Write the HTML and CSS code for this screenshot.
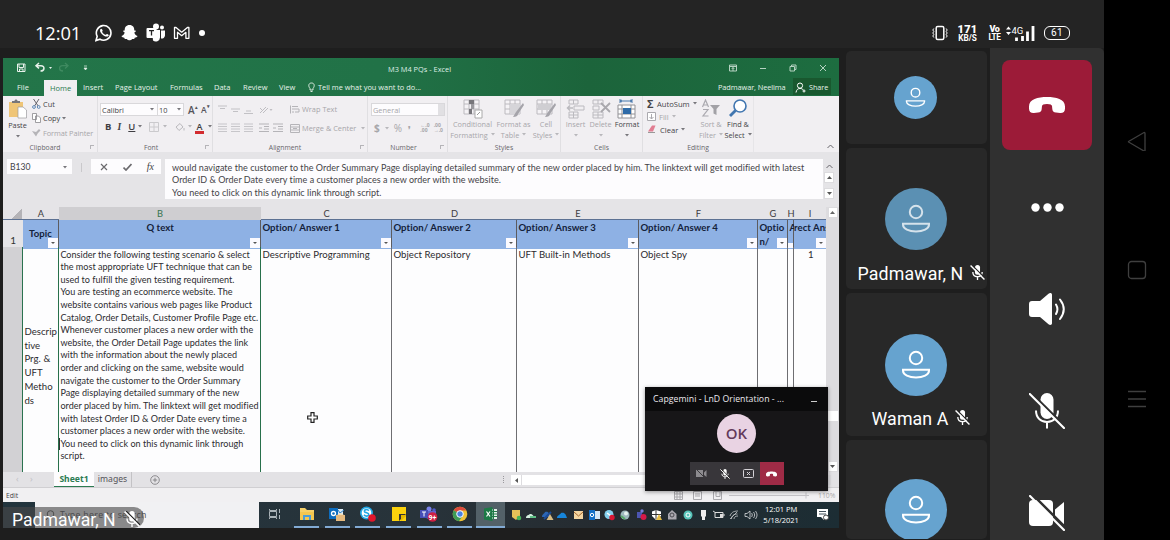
FILE: index.html
```html
<!DOCTYPE html>
<html lang="en">
<head>
<meta charset="utf-8">
<title>Meeting</title>
<link rel="stylesheet" href="styles.css">
</head>
<body>
<svg class="defs" width="0" height="0">
  <symbol id="person" viewBox="0 0 62 62"><circle cx="31" cy="24" r="6.2"/><path d="M18 35.8h26v1c0 4-6 6.600-13 6.600s-13-2.600-13-6.600z"/></symbol>
  <symbol id="micoff" viewBox="0 0 36 36"><rect x="11.500" y="0" width="13" height="26" rx="6.500" fill="currentColor"/><path d="M7 17.500c0 7 4.500 11.500 11 11.500s11-4.500 11-11.500M18 29v6.500" fill="none" stroke="currentColor" stroke-width="2"/><path class="cut" d="M2.500 .2L36 33.500" /><path d="M.8 1L35 35" stroke="currentColor" stroke-width="2.100" stroke-linecap="round"/></symbol>
  <symbol id="micsmall" viewBox="0 0 16 16"><rect x="5.300" y="0" width="5.400" height="10.500" rx="2.700" fill="currentColor"/><path d="M3 7.500c0 3.300 2 5 5 5s5-1.700 5-5M8 12.500V16" fill="none" stroke="currentColor" stroke-width="1.400"/><path class="scut" d="M2 0L16 14"/><path d="M.6.600L15.400 15.400" stroke="currentColor" stroke-width="1.500"/></symbol>
  <symbol id="phone" viewBox="0 0 36 18"><path d="M18 1C9 1 0 3 0 10.500v2C0 16 2 17.200 5 17l4-.5c2.500-.3 3.500-1 3.700-3.500l.3-3c.2-1.300 1.500-2 5-2s4.800.7 5 2l.3 3c.2 2.500 1.200 3.200 3.700 3.500l4 .5c3 .2 5-1 5-4.500v-2C36 3 27 1 18 1z" fill="currentColor"/></symbol>
  <symbol id="lines" viewBox="0 0 9 9"><path d="M0 1h9M0 3.500h9M0 6h9M0 8.500h9" stroke="#c2c1c5" stroke-width=".9"/></symbol>
  <symbol id="down" viewBox="0 0 4 3"><path d="M0 0h4L2 2.600z" fill="currentColor"/></symbol>
  <symbol id="table" viewBox="0 0 20 20"><path d="M1 1h15v14H1zM1 5h15M1 10h15M6 1v14M11 1v14" fill="#f5f3f6" stroke="#bcbabf"/></symbol>
</svg>
<div class="screen">
<div class="phone">
  <header class="status">
    <span class="clock">12:01</span>
    <svg class="notif" width="112" height="20" viewBox="0 0 112 20">
      <path d="M1 17.500l1.200-4.200A7.300 7.300 0 1 1 5 16.200z" fill="none" stroke="#fff" stroke-width="1.600"/>
      <path d="M5.300 6.200c1-1 1.700-.6 2.300 1 .3.800-.8 1.300-.3 2 .8 1.300 1.600 2 2.900 2.600.8.400 1.200-1.300 2-.8 1.500.8 2 1.200 1.200 2-2.500 2.500-9.900-3.300-8.100-6.800z" fill="#fff"/>
      <path d="M34.500 2c3.300 0 4.900 2.300 4.800 5.500l1.300-.1.200 1-1.500 1c.5 2 1.500 3 3.200 3.600-.2 1.400-1.700 1.500-2.800 1.800l-.5 1.200-2-.1c-1 1-1.800 1.300-2.700 1.300s-1.700-.3-2.700-1.300l-2 .1-.5-1.200c-1.100-.3-2.600-.4-2.800-1.800 1.700-.6 2.700-1.600 3.200-3.600l-1.500-1 .2-1 1.300.1C29.600 4.300 31.200 2 34.500 2z" fill="#fff"/>
      <circle cx="61" cy="3.500" r="3" fill="#fff"/><circle cx="67" cy="4.500" r="2" fill="#fff"/><path d="M57 7h8v7.500a4.200 4.200 0 0 1-7 3zM66 7.500h4v5a3.300 3.300 0 0 1-4 3z" fill="#fff"/><rect x="51.500" y="5" width="10" height="10" rx="1" fill="#fff"/><path d="M54 7.600h5M56.500 7.600v5" stroke="#242424" stroke-width="1.300"/>
      <path d="M79.500 15.300V4.500h1.500l5.700 4.700 5.700-4.700h1.500v10.800h-3V9.300l-4.200 3.400-4.200-3.400v6z" fill="none" stroke="#fff" stroke-width="1.300" stroke-linejoin="round"/>
      <circle cx="107" cy="10" r="3" fill="#fff"/>
    </svg>
    <span class="spacer"></span>
    <svg class="vib" width="16" height="16" viewBox="0 0 16 16"><rect x="4.200" y="1.500" width="7.600" height="13" rx="1.500" fill="none" stroke="#fff" stroke-width="1.500"/><path d="M1.800 3.500l-1 1.500 1 1.500-1 1.500 1 1.500-1 1.500 1 1.500M14.200 3.500l1 1.500-1 1.500 1 1.500-1 1.500 1 1.500-1 1.500" fill="none" stroke="#fff"/></svg>
    <span class="speed"><b>171</b><i>KB/S</i></span>
    <span class="volte"><b>Vo</b><i>LTE</i></span>
    <svg width="29" height="18" viewBox="0 0 29 18" class="signal"><path d="M0 5.500L2.500 2.500 5 5.500zM0 8l2.500 3L5 8z" fill="#fff"/><path d="M10.500 13.500V17M16.500 12V17M21.500 7.500V17M27 2V17" stroke="#fff" stroke-width="2.800"/><text x="5.500" y="9.500" class="g4">4G</text></svg>
    <span class="battery">61</span>
  </header>
  <main class="call">
    <section class="share">
      <div class="excel">
        <div class="titlebar">
          <svg width="80" height="14" viewBox="0 0 80 14" fill="none" stroke="#e7f1ea"><path d="M1.500 3h7.500v7.500H1.500zM3 3v3.500h4.500V3M3.500 10.500V8h3.500v2.500" /><path d="M23 2l-3 2.700 3 2.700M20.500 4.700H25c4 0 4 5.300-.5 5.300" stroke-width="1.500"/><path d="M33 6h3l-1.500 2z" fill="#e7f1ea" stroke="none"/><path d="M49 2l3 2.700L49 7.400M51 4.700h-4.500c-4 0-4 5.300.5 5.300" stroke="#3f8a60" stroke-width="1.300"/><path d="M68 5h3M68 7h3l-1.500 2z" fill="#e7f1ea" stroke-width=".7"/></svg>
          <span class="doc">M3 M4 PQs - Excel</span>
          <svg width="104" height="12" viewBox="0 0 104 12" fill="none" stroke="#b5d2c1"><path d="M1.500 3h7v6h-7zM1.500 4.500h7M5 9V5.500M3.700 7L5 5.500 6.300 7"/><path d="M32 6.500h6M62 4.500h4.500V9H62zM63.500 4.500V3H68v4.500h-1.500M92 3l6 6M98 3l-6 6"/></svg>
        </div>
        <nav class="tabs">
          <span class="t-file">File</span><span class="t-home">Home</span><span class="t-ins">Insert</span><span class="t-pl">Page Layout</span><span class="t-fo">Formulas</span><span class="t-da">Data</span><span class="t-re">Review</span><span class="t-vi">View</span>
          <span class="tell"><svg width="7" height="10" viewBox="0 0 7 10" fill="none" stroke="#dcebe1"><path d="M2 6.500C0 4 .5 1 3.500 1S7 4 5 6.500V8H2zM2.500 9.500h2"/></svg>Tell me what you want to do...</span>
          <span class="user">Padmawar, Neelima</span>
          <span class="sharebtn"><svg width="11" height="11" viewBox="0 0 11 11" fill="none" stroke="#fff"><circle cx="5" cy="3.600" r="2.600"/><path d="M1 10.500C1.500 7.500 3 6.500 5 6.500s2.500.6 3.300 1.500M9 7.500v3M7.500 9h3"/></svg>Share</span>
        </nav>
        <div class="ribbon">
          <div class="group clip">
            <div class="g-body">
              <div class="big paste"><svg width="19" height="20" viewBox="0 0 19 20"><path d="M1 3h14v15H1z" fill="#efc577"/><path d="M4 4V2h2.500c0-2 3-2 3 0H12v2z" fill="#77767a"/><path d="M10 8h5l3.500 3v8H10z" fill="#fff" stroke="#9c9b9f" stroke-width=".7"/></svg><span>Paste</span><svg class="ar" width="4" height="3"><use href="#down"/></svg></div>
              <div class="stack cs">
                <span><svg width="9" height="10" viewBox="0 0 9 10" fill="none" stroke="#66656b"><path d="M1.500 0l4.700 7M7 0L2.500 7"/><circle cx="2" cy="8" r="1.400" stroke="#5e89b7"/><circle cx="6.700" cy="8" r="1.400" stroke="#5e89b7"/></svg>Cut</span>
                <span><svg width="9" height="10" viewBox="0 0 9 10" fill="#fff" stroke="#88878c" stroke-width=".8"><path d="M.5.5h4v6h-4zM3.500 3h3L8.500 5v4.500h-5z"/></svg>Copy <svg class="ar" width="4" height="3"><use href="#down"/></svg></span>
                <span class="dim"><svg width="9" height="8" viewBox="0 0 9 8"><path d="M0 2l4 1 3-3 1.500 1.500L6 4 4 7.500z" fill="#b5b4b8"/></svg>Format Painter</span>
              </div>
            </div>
            <div class="g-label corn"><span>Clipboard</span></div>
          </div>
          <div class="group font">
            <div class="g-body col">
              <div class="row r1"><span class="combo c1">Calibri<svg class="ar" width="4" height="3"><use href="#down"/></svg></span><span class="combo c2">10<svg class="ar" width="4" height="3"><use href="#down"/></svg></span><span class="ga">A<sup>▴</sup></span><span class="gs">A<sup>▾</sup></span></div>
              <div class="row r2"><b>B</b><em>I</em><u>U</u><svg class="ar" width="4" height="3"><use href="#down"/></svg>
                <svg width="10" height="10" viewBox="0 0 10 10" fill="none" stroke="#cbcacd"><path d="M.5.5h9v9h-9zM5 .5v9M.5 5h9"/></svg><svg class="ar lt" width="4" height="3"><use href="#down"/></svg>
                <svg width="10" height="10" viewBox="0 0 10 10" fill="none" stroke="#b9b8bc"><path d="M1 5l4-3.500 3 3.500-4 3.500zM9 6v2.500"/></svg><svg class="ar lt" width="4" height="3"><use href="#down"/></svg>
                <span class="redA">A</span><svg class="ar" width="4" height="3"><use href="#down"/></svg></div>
            </div>
            <div class="g-label corn"><span>Font</span></div>
          </div>
          <div class="group align">
            <div class="g-body al">
              <div class="acol">
                <div class="row"><svg width="9" height="9"><path d="M0 1h9M2 3.500h5" stroke="#c2c1c5"/></svg><svg width="9" height="9"><path d="M0 4h9M2 6.500h5" stroke="#c2c1c5"/></svg><svg width="9" height="9"><path d="M2 6h5M0 8.500h9" stroke="#c2c1c5"/></svg><svg class="ori" width="14" height="9" viewBox="0 0 14 9"><path d="M1 8l6-6M4 8l5-5M1 3l3 3" stroke="#bfbec2" fill="none"/><path d="M10.500 4h3L12 6z" fill="#bfbec2"/></svg></div>
                <div class="row"><svg width="9" height="9"><use href="#lines"/></svg><svg width="9" height="9"><use href="#lines"/></svg><svg width="9" height="9"><use href="#lines"/></svg><svg class="ind" width="10" height="9"><path d="M0 1h10M5 3.500h5M5 6h5M0 8.500h10M0 5h3" stroke="#b5b4b8"/></svg><svg width="10" height="9"><path d="M0 1h10M5 3.500h5M5 6h5M0 8.500h10M0 5h3" stroke="#b5b4b8"/></svg></div>
              </div>
              <div class="acol2 dim">
                <span><svg width="10" height="9" viewBox="0 0 10 9" fill="none" stroke="#b5b4b8"><path d="M.5.500v8M2 1.500h6M2 4h7v3H5M2 7h2"/></svg>Wrap Text</span>
                <span><svg width="10" height="9" viewBox="0 0 10 9" fill="none" stroke="#b5b4b8"><path d="M.5.500h9v8h-9zM.5 3h9M.5 6h9M3 4.500h4"/></svg>Merge &amp; Center<svg class="ar" width="4" height="3"><use href="#down"/></svg></span>
              </div>
            </div>
            <div class="g-label corn"><span>Alignment</span></div>
          </div>
          <div class="group num dim">
            <div class="g-body col">
              <div class="combo c3">General<i></i></div>
              <div class="row nr"><b>$</b><svg class="ar lt" width="4" height="3"><use href="#down"/></svg><span class="pct">%</span><b class="comma">❜</b><span class="dec">←.0<br>.00</span><span class="dec">.00<br>→.0</span></div>
            </div>
            <div class="g-label corn"><span>Number</span></div>
          </div>
          <div class="group sty dim">
            <div class="g-body">
              <div class="big w46"><svg width="20" height="20" viewBox="0 0 20 20"><use href="#table"/><path d="M6 1h5v4H6zM6 10h3v5H6z" fill="#77767b"/><path d="M8 5h3v5H8z" fill="#9a999e"/><path d="M12 11h7v8h-7z" fill="#fff" stroke="#aaa"/><path d="M14 16l3-3" stroke="#999"/></svg><span>Conditional</span><span>Formatting <svg class="ar" width="4" height="3"><use href="#down"/></svg></span></div>
              <div class="big w36"><svg width="20" height="20" viewBox="0 0 20 20"><use href="#table"/><path d="M6 5h10v10H6z" fill="#d6d5d9"/><path d="M19 4l-7 9-3 5c3 0 5-1 5-3l6-9z" fill="#a5a4aa"/></svg><span>Format as</span><span>Table <svg class="ar" width="4" height="3"><use href="#down"/></svg></span></div>
              <div class="big w28"><svg width="20" height="20" viewBox="0 0 20 20"><use href="#table"/><path d="M2 5h13v6H2z" fill="#cfced2"/><path d="M19 4l-7 9-3 5c3 0 5-1 5-3l6-9z" fill="#a5a4aa"/></svg><span>Cell</span><span>Styles <svg class="ar" width="4" height="3"><use href="#down"/></svg></span></div>
            </div>
            <div class="g-label"><span>Styles</span></div>
          </div>
          <div class="group cells">
            <div class="g-body">
              <div class="big w25 dim"><svg width="20" height="20" viewBox="0 0 20 20" fill="none" stroke="#bbbabf"><path d="M3 1h9v4H3zM7.500 1v4M8 7h10v4H8zM3 13h9v6H3zM3 16h9M7.500 13v6"/><path d="M7 9H1M4 6.500L1.500 9 4 11.500" stroke-width="1.500"/></svg><span>Insert</span><svg class="ar" width="4" height="3"><use href="#down"/></svg></div>
              <div class="big w25 dim"><svg width="20" height="20" viewBox="0 0 20 20" fill="none" stroke="#bbbabf"><path d="M2 1h10v4H2zM7 1v4M2 7h6v4H2zM2 13h10v6H2zM2 16h10M7 13v6"/><path d="M10 4l9 9M19 4l-9 9" stroke="#a9a8ad" stroke-width="1.800"/></svg><span>Delete</span><svg class="ar" width="4" height="3"><use href="#down"/></svg></div>
              <div class="big w27"><svg width="20" height="20" viewBox="0 0 20 20" fill="#fff" stroke="#929196"><path d="M1 6h17v13H1zM1 10h17M1 15h17M5 6v13M14 6v13"/><path d="M6 9h8v6H6z" fill="#2f6ba8" stroke="none"/><path d="M3 2h12M3 0v4M15 0v4M5 1L3 2l2 1M13 1l2 1-2 1" stroke="#4778ad" fill="none"/></svg><span>Format</span><svg class="ar" width="4" height="3"><use href="#down"/></svg></div>
            </div>
            <div class="g-label"><span>Cells</span></div>
          </div>
          <div class="group edit">
            <div class="g-body">
              <div class="stack es">
                <span><b class="sigma">Σ</b>AutoSum <svg class="ar" width="4" height="3"><use href="#down"/></svg></span>
                <span class="dim"><svg width="9" height="9" viewBox="0 0 9 9" fill="#fff" stroke="#aaa9ae"><path d="M.5.500h8v8h-8zM4.500 2v5M2.500 5l2 2 2-2"/></svg>Fill <svg class="ar" width="4" height="3"><use href="#down"/></svg></span>
                <span><svg width="10" height="9" viewBox="0 0 10 9"><path d="M5 .5h3.500L6 6.500H1z" fill="#e17d92"/><path d="M1 7.500h7" stroke="#999"/></svg>Clear <svg class="ar" width="4" height="3"><use href="#down"/></svg></span>
              </div>
              <div class="big w28 dim"><svg width="20" height="20" viewBox="0 0 20 20"><path d="M1.500 8L4.500 1l3 7M2.500 6h4M2 10.500h5l-5 6.500h5.500" fill="none" stroke="#aaa9af" stroke-width="1.200"/><path d="M9 6h10l-3.500 4v6l-3-1.500V10z" fill="#a2a1a6"/></svg><span>Sort &amp;</span><span>Filter <svg class="ar" width="4" height="3"><use href="#down"/></svg></span></div>
              <div class="big w26"><svg width="20" height="20" viewBox="0 0 20 20"><circle cx="12" cy="7" r="6" fill="#fff" stroke="#4176b0" stroke-width="1.600"/><path d="M7.500 11.500L2 17" stroke="#4176b0" stroke-width="2.800"/></svg><span>Find &amp;</span><span>Select <svg class="ar" width="4" height="3"><use href="#down"/></svg></span></div>
            </div>
            <div class="g-label"><span>Editing</span></div>
          </div>
          <svg class="collapse" width="7" height="5" viewBox="0 0 7 5"><path d="M.5 4l3-3 3 3" fill="none" stroke="#66656a"/></svg>
        </div>
        <div class="formula">
          <div class="name">B130<svg class="ar" width="4" height="3"><use href="#down"/></svg></div>
          <span class="vdots"></span>
          <div class="fx"><svg width="8" height="8"><path d="M1 1l6 6M7 1L1 7" stroke="#6b6a6e" stroke-width="1.200"/></svg><svg width="9" height="8"><path d="M.5 4.500l2.500 2.500L8.500 1" stroke="#6b6a6e" stroke-width="1.700" fill="none"/></svg><i>fx</i></div>
          <div class="ftext"><p>would navigate the customer to the Order Summary Page displaying detailed summary of the new order placed by him. The linktext will get modified with latest</p><p>Order ID &amp; Order Date every time a customer places a new order with the website.</p><p>You need to click on this dynamic link through script.</p></div>
          <div class="fscroll"><svg width="7" height="5" viewBox="0 0 7 5"><path d="M.5 4l3-3 3 3" fill="none" stroke="#66656a"/></svg><span><svg width="5" height="3"><path d="M0 3h5L2.500 0z" fill="#555"/></svg></span><span><svg width="5" height="3"><path d="M0 0h5L2.500 3z" fill="#555"/></svg></span></div>
        </div>
        <div class="gridwrap">
          <div class="sheet">
            <div class="cols hd"><span class="corner"></span><span>A</span><span class="sel">B</span><span>C</span><span>D</span><span>E</span><span>F</span><span>G</span><span>H</span><span>I</span></div>
            <div class="cols blue">
              <span class="rn">1</span>
              <span class="cell topic">Topic<i class="flt"></i></span>
              <span class="cell qt">Q text<i class="flt"></i></span>
              <span class="cell">Option/ Answer 1<i class="flt"></i></span>
              <span class="cell">Option/ Answer 2<i class="flt"></i></span>
              <span class="cell">Option/ Answer 3<i class="flt"></i></span>
              <span class="cell">Option/ Answer 4<i class="flt"></i></span>
              <span class="cell gcol">Optio<br>n/<i class="flt"></i></span>
              <span class="cell tiny">A<i class="flt"></i></span>
              <span class="cell">rect Ans<i class="flt"></i></span>
            </div>
            <div class="cols body">
              <span class="rn"></span>
              <div class="cell ca"><p>Descrip</p><p>tive</p><p>Prg. &amp;</p><p>UFT</p><p>Metho</p><p>ds</p></div>
              <div class="cell cb"><p>Consider the following testing scenario &amp; select</p><p>the most appropriate UFT technique that can be</p><p>used to fulfill the given testing requirement.</p><p>You are testing an ecommerce website. The</p><p>website contains various web pages like Product</p><p>Catalog, Order Details, Customer Profile Page etc.</p><p>Whenever customer places a new order with the</p><p>website, the Order Detail Page updates the link</p><p>with the information about the newly placed</p><p>order and clicking on the same, website would</p><p>navigate the customer to the Order Summary</p><p>Page displaying detailed summary of the new</p><p>order placed by him. The linktext will get modified</p><p>with latest Order ID &amp; Order Date every time a</p><p>customer places a new order with the website.</p><p class="caret">You need to click on this dynamic link through</p><p>script.</p></div>
              <div class="cell cc">Descriptive Programming<svg class="cursor" width="11" height="11" viewBox="0 0 11 11"><path d="M4 .7h3V4h3.300v3H7v3.300H4V7H.7V4H4z" fill="#fff" stroke="#222" stroke-width="1.200"/></svg></div>
              <div class="cell">Object Repository</div>
              <div class="cell">UFT Built-in Methods</div>
              <div class="cell">Object Spy</div>
              <div class="cell"></div><div class="cell"></div><div class="cell one">1</div>
            </div>
          </div>
          <div class="vscroll"><span><svg width="5" height="3"><path d="M0 3h5L2.500 0z" fill="#666"/></svg></span><i></i><span><svg width="5" height="3"><path d="M0 0h5L2.500 3z" fill="#555"/></svg></span></div>
        </div>
        <div class="sheets"><span class="arrows">‹</span><span class="arrows">›</span><span class="s1">Sheet1</span><span class="s2">images</span><svg class="plus" width="10" height="10" viewBox="0 0 10 10" fill="none" stroke="#77767a" stroke-width=".8"><circle cx="5" cy="5" r="4.300"/><path d="M5 2.800v4.400M2.800 5h4.400"/></svg><span class="grip"></span><span class="hs"><i><svg width="3" height="5"><path d="M3 0v5L0 2.500z" fill="#555"/></svg></i><b></b></span></div>
        <div class="sbar"><span>Edit</span><svg width="160" height="9" viewBox="0 0 160 9" fill="none" stroke="#aaa9ad"><path d="M.5.500h8v8h-8zM.5 3h8M.5 6h8M3 .5v8M6 .5v8M19.500.500h8v8h-8zM21 3h5M21 5h5M39.500.500h8v8h-8zM42 .5v5h4v-5"/><path d="M55 4.500h77M129 4.500h6M132 1.500v6" stroke="#c6c5c9"/></svg><em>110%</em></div>
        <div class="taskbar">
          <span class="win"></span>
          <span class="search"><svg width="10" height="11" viewBox="0 0 10 11" fill="none" stroke="#555"><circle cx="5.500" cy="4" r="3.300"/><path d="M3.500 7L1 10"/></svg>Type here to search</span>
          <span class="app view"><svg width="14" height="12" viewBox="0 0 14 12" fill="none" stroke="#aab3b8"><path d="M1.500 3.500h7v5h-7zM1.500 1v1.500h7V1M1.500 11V9.500h7V11M11.500 1v4M11.500 7v4"/></svg></span>
          <span class="app"><svg width="16" height="14" viewBox="0 0 16 14"><path d="M1 1h5l2 2h7v10H1z" fill="#f6d069"/><path d="M1 5h14v8H1z" fill="#f4c650"/><path d="M4 13V8h8v5h-2v-3H6v3z" fill="#4b9dd9"/></svg></span>
          <span class="app"><svg width="18" height="16" viewBox="0 0 18 16"><path d="M7 3h8v9H7z" fill="#dcebf7"/><path d="M1 2h9v11H1z" fill="#0d6cbe"/><circle cx="5.500" cy="7.500" r="2" fill="none" stroke="#fff" stroke-width="1.300"/><path d="M10 4l2 3 4-3" stroke="#2a7ec6" fill="none"/><path d="M8 9h9v6H8z" fill="#e5b97e"/><path d="M9 9l3.500-2L16 9" fill="#f2dcb5"/></svg></span>
          <span class="app"><svg width="18" height="16" viewBox="0 0 18 16"><circle cx="7.500" cy="7" r="6.500" fill="#22a7e5"/><circle cx="7.500" cy="7" r="4.800" fill="#fff"/><path d="M9.800 4.700C8.500 2.700 4.800 3.600 5.500 5.600c.6 1.500 4.500 1 4.300 3-.2 1.900-3.500 2-4.800.2" fill="none" stroke="#22a7e5" stroke-width="1.600"/><circle cx="13" cy="12" r="3.800" fill="#e0162b"/></svg></span>
          <span class="app"><svg width="16" height="14" viewBox="0 0 16 14"><path d="M1 0h14v14H1z" fill="#fbd10d"/><path d="M8 7h7l-7 7z" fill="#333"/><path d="M10 8h5v1l-5 5z" fill="#e5b900"/></svg></span>
          <span class="app"><svg width="18" height="16" viewBox="0 0 18 16"><circle cx="9" cy="3" r="2.500" fill="#7b83eb"/><circle cx="14" cy="4" r="1.800" fill="#5059c9"/><path d="M6 5h10v6l-5 3-5-2z" fill="#6264c7"/><path d="M0 4h8v8H0z" fill="#464eb8"/><path d="M2 6h4M4 6v4.500" stroke="#fff"/><circle cx="12.500" cy="11" r="4.800" fill="#ce1f43"/><text x="8.500" y="13.800" class="bdg">9+</text></svg></span>
          <span class="app"><svg width="16" height="16" viewBox="0 0 16 16"><circle cx="8" cy="8" r="7.300" fill="#f0c337"/><path d="M8 8L1.700 4.300A7.300 7.300 0 0 1 14.300 4.500H8z" fill="#dc4a3d"/><path d="M8 8L1.700 4.300A7.300 7.300 0 0 0 7 15.200L10.500 10z" fill="#3f9c57"/><circle cx="8" cy="8" r="3.300" fill="#4a83e0" stroke="#fff"/></svg></span>
          <span class="app act"><svg width="14" height="14" viewBox="0 0 14 14"><path d="M7 2h6v10H7z" fill="#e5f2ea"/><path d="M9.500 2v10M7 4.500h6M7 7h6M7 9.500h6" stroke="#1f7a48"/><path d="M0 1.500L8.500 0v14L0 12.500z" fill="#1d7a46"/><path d="M2.500 4.500l3.500 5M6 4.500l-3.500 5" stroke="#fff" stroke-width="1.200"/></svg></span>
          <svg class="tray" width="252" height="14" viewBox="0 0 252 14">
            <path d="M4 2h8v6l-4 4-4-3z" fill="#e6c158"/><circle cx="11" cy="10" r="2.300" fill="#48b35a"/>
            <path d="M18 10c0-3 3-3 4-4 3 0 3 2 5 4z" fill="#d4efe0"/><path d="M22 8h6v2h-6z" fill="#60bf87"/>
            <path d="M34 9c0-3 2-3 3-5 4-1 4 2 6 5z" fill="#2c66b4"/><path d="M36 11l7-7" stroke="#1b4a96" stroke-width="2"/><path d="M42 6l3.500 6h-7z" fill="#d8bc83"/>
            <path d="M49 10c0-3 3-3 4-5 4-1 5 2 6 5z" fill="#1685db"/>
            <path d="M66 3h9v8h-9z" fill="#f3d5a1"/><path d="M66 4l4.500 4L75 4" stroke="#a5662c" fill="none"/>
            <path d="M86 3h6v8h-6z" fill="#d5e7f6"/><path d="M81 2h6v10h-6z" fill="#1470c6"/><circle cx="84" cy="7" r="1.700" stroke="#fff" fill="none"/>
            <circle cx="101" cy="6.500" r="4.500" fill="#84d0ee"/><path d="M99 5l4 3" stroke="#fff" stroke-width="1.500"/><circle cx="104" cy="9.500" r="2.700" fill="#d71734"/>
            <circle cx="117" cy="7" r="4.500" fill="#9db8bd"/><circle cx="118" cy="5.500" r="2" fill="#e5f1ee"/><path d="M113 8l4 3" stroke="#55a868" stroke-width="2"/>
            <path d="M129 4h5v6h-5z" fill="#4c55b0"/><circle cx="134" cy="3" r="1.700" fill="#767ddb"/><circle cx="135.500" cy="9" r="3" fill="#d61948"/>
            <path d="M148 2l5 1.500V8l-5 4-4-4V3.500z" fill="#fff"/><path d="M148 2v9M144 6.500h9" stroke="#333"/><path d="M151 6l3 6h-6z" fill="#e6bd45"/>
            <path d="M160 6l4-4 4.500 4v5.500H160z" fill="#a9a8b0"/><circle cx="164" cy="7" r="2" fill="none" stroke="#484950"/>
            <circle cx="180" cy="7" r="4.500" fill="#57c4ba"/><circle cx="180" cy="7" r="2" fill="none" stroke="#fff"/>
            <path d="M193 2h5v6l-1 1v3h-3V9l-1-1z" fill="#eee"/>
            <path d="M207 4.500h8v5h-8zM216 6v2M205 3l3 2" fill="none" stroke="#ddd"/><path d="M212 6h3v3h-3z" fill="#ddd"/>
            <path d="M222 11l7-7M223.500 11c0-3 2-5 6-5M226 11c0-2 1.500-3 4-3M222 8c1-3 3-5 8-5" fill="none" stroke="#c5c8ca" stroke-width=".8"/>
            <path d="M237 5.500h2l3-2.500v8l-3-2.500h-2zM243.500 5c1 1 1 3 0 4M245.500 4c1.500 2 1.500 4 0 6M247.500 3c2 3 2 5 0 8" fill="none" stroke="#d8dbdd" stroke-width=".8"/>
          </svg>
          <span class="time">12:01 PM<br>5/18/2021</span>
          <svg class="nt" width="12" height="12" viewBox="0 0 12 12"><path d="M0 0h11v8H7v3L4 8H0z" fill="#fff"/><path d="M2 2.500h7M2 5h7" stroke="#42505a"/><circle cx="9" cy="8.500" r="2.500" fill="#fff" stroke="#444"/></svg>
        </div>
      </div>
      <div class="popup">
        <div class="ptitle"><span>Capgemini - LnD Orientation - ...</span><i></i></div>
        <div class="ok">OK</div>
        <div class="pbar"><span><svg width="11" height="9" viewBox="0 0 11 9"><path d="M0 1h7v7H0zM8 3.500L10.500 1v7L8 6z" fill="#8d8b8f"/><path d="M0 0l9 9" stroke="#3b3a3d"/></svg></span><span><svg class="pm" width="10" height="10"><use href="#micsmall"/></svg></span><span><svg width="11" height="9" viewBox="0 0 11 9" fill="none" stroke="#d5d3d7"><rect x=".5" y=".5" width="10" height="8" rx="1"/><path d="M4 3l3 3M7 3L4 6"/></svg></span><span class="end"><svg width="11" height="6"><use href="#phone"/></svg></span></div>
      </div>
      <div class="sharer"><span>Padmawar, N</span><svg width="16" height="16"><use href="#micsmall"/></svg></div>
    </section>
    <section class="tiles">
      <div class="tile t1"><svg class="av sm"><use href="#person"/></svg></div>
      <div class="tile t2"><svg class="av dimav"><use href="#person"/></svg><p>Padmawar, N <svg class="mo" width="15" height="15"><use href="#micsmall"/></svg></p></div>
      <div class="tile t3"><svg class="av"><use href="#person"/></svg><p>Waman A <svg class="mo" width="15" height="15"><use href="#micsmall"/></svg></p></div>
      <div class="tile t4"><svg class="av"><use href="#person"/></svg></div>
    </section>
    <aside class="controls">
      <div class="btn hang"><svg width="36" height="18"><use href="#phone"/></svg></div>
      <div class="btn"><svg width="33" height="9" fill="#fff"><circle cx="4.500" cy="4.500" r="4.200"/><circle cx="16.500" cy="4.500" r="4.200"/><circle cx="28.500" cy="4.500" r="4.200"/></svg></div>
      <div class="btn"><svg width="36" height="32" viewBox="0 0 36 32"><path d="M0 11a3 3 0 0 1 3-3h8l8.500-7.200c1.500-1.300 3.500-.8 3.500 1v28.400c0 1.800-2 2.300-3.500 1L11 24H3a3 3 0 0 1-3-3z" fill="#fff"/><path d="M27 11.500c1.800 3 1.800 6.500 0 9.500M31 6.500c5 6.500 5 13 0 19.500" fill="none" stroke="#fff" stroke-width="2" stroke-linecap="round"/></svg></div>
      <div class="btn mic"><svg width="36" height="36"><use href="#micoff"/></svg></div>
      <div class="btn"><svg width="36" height="36" viewBox="0 0 36 36"><rect y="5" width="24" height="26" rx="4" fill="#fff"/><path d="M26 14.500L35 7v22.500L26 23z" fill="#fff"/><path d="M3-1L37 33" stroke="#303030" stroke-width="2.500"/><path d="M1 1l34 34" stroke="#fff" stroke-width="2.100" stroke-linecap="round"/></svg></div>
    </aside>
  </main>
</div>
<nav class="sysnav">
  <svg width="20" height="20" viewBox="0 0 20 20"><path d="M1.500 10.500L17 1.500q1-.3 1 1v17q0 1-1 .5L1.500 11z"/></svg>
  <svg width="20" height="20" viewBox="0 0 20 20"><rect x="1.500" y="1.500" width="17" height="17" rx="3"/></svg>
  <svg width="20" height="20" viewBox="0 0 20 20"><path d="M1 2.500h18M1 10h18M1 17.500h18"/></svg>
</nav>
</div>
</body>
</html>
```

FILE: styles.css
```css
*{box-sizing:border-box}
body{margin:0;background:#000;color:#444347;font-family:"Open Sans","Noto Sans",sans-serif}
p{margin:0}
svg{display:block;flex:none}
.defs{position:absolute}
.screen{display:flex;width:1170px;height:540px;overflow:hidden}
.phone{width:1104px;display:flex;flex-direction:column;background:#1e1e1e}
.sysnav{width:66px;display:flex;flex-direction:column;align-items:center;padding:131px 1px 0 0;gap:109px}
.sysnav svg{fill:none;stroke:#3f3f3f;stroke-width:1.3}

/* phone status bar */
.status{height:48px;background:#242424;display:flex;align-items:center;padding:18px 34px 0 35px;color:#fff;font-family:Roboto,sans-serif}
.clock{font:18.3px/20px "Open Sans",sans-serif;width:60px;letter-spacing:-.1px}
.spacer{flex:1}
.vib{margin-right:8px}
.speed,.volte{display:flex;flex-direction:column;align-items:center;font-weight:700;line-height:8px;font-size:8px}
.speed{width:23px;margin-right:9px}
.speed b{font-size:11px;line-height:9px;letter-spacing:.3px}
.speed i,.volte i,.volte b{font-style:normal;font-size:8.2px}
.volte{width:13px;margin-right:5px;letter-spacing:-.4px}
.volte b{font-size:9px}
.signal{margin-right:9px}
.g4{font:9.500px Roboto,sans-serif;fill:#fff}
.battery{width:26px;height:14px;border:1.6px solid #fff;border-radius:6px;font-size:10px;line-height:11px;text-align:center;letter-spacing:.5px}

.call{flex:1;display:flex;height:492px}
.share{width:843px;padding:10px 0 0 3px;position:relative}
.excel{width:836px;height:470px;overflow:hidden;font-size:7.2px;background:#e5e4e7}

.titlebar{height:20px;background:linear-gradient(90deg,#237549,#217247 45%,#1c643b 70%,#1d6d40);display:flex;align-items:center;padding:0 7px 0 13px;color:#dfeee5}
.titlebar .doc{width:70px;margin-left:292px;margin-right:273px;white-space:nowrap;line-height:10px;padding-top:2px;font-size:7.400px}
.tabs{height:18px;background:linear-gradient(90deg,#237549,#217247 45%,#1c643b 70%,#1d6d40);display:flex;color:#e6f2ea;line-height:19px;font-size:7.5px;white-space:nowrap}
.tabs span{flex:none}
.t-file{width:41px;padding-left:14px}
.t-home{width:33px;background:#f1eff2;color:#2b7a50;text-align:center;margin-top:2px;line-height:16px}
.t-ins{padding-left:6px;width:35px}
.t-pl{width:54px;padding-left:3px}
.t-fo{width:45px;padding-left:4px}
.t-da{width:28px;padding-left:3px}
.t-re{width:36px;padding-left:4px}
.t-vi{width:29px;padding-left:4px}
.tell{display:flex;align-items:center;gap:3px;width:414px;padding-left:4px;font-size:7.400px}
.user{width:75px;font-size:7.4px;letter-spacing:-.1px}
.sharebtn{display:flex;align-items:center;gap:3px;background:#19582f;height:17px;width:38px;padding:2px 0 0 2px;font-size:7.200px}

/* ribbon */
.ribbon{height:56px;background:#f1eff2;display:flex;position:relative}
.group{border-right:1px solid #e0dfe2;display:flex;flex-direction:column;white-space:nowrap}
.g-body{height:46px;display:flex}
.g-body.col{flex-direction:column}
.g-label{height:10px;line-height:11px;text-align:center;font-size:6.8px;color:#67666b}
.corn{background:linear-gradient(#b5b4b8,#b5b4b8) calc(100% - 3px) 3px/4px 1px no-repeat,linear-gradient(#b5b4b8,#b5b4b8) calc(100% - 6px) 3px/1px 4px no-repeat}
.clip{width:95px}.font{width:115px}.align{width:155px}.num{width:80px}.sty{width:113px}.cells{width:82px}.edit{width:111px;border-color:#e6e5e8}
.clip .g-label{padding-right:10px}.font .g-label,.num .g-label{padding-right:8px}.align .g-label{padding-right:10px}
.dim{color:#a7a6aa}
.ar{color:#77767b}
.dim .ar,.lt{color:#b8b7bb}
.big{display:flex;flex-direction:column;align-items:center;padding-top:3px;line-height:10.500px;font-size:7.3px}
.big span{display:flex;align-items:center;gap:3px}
.big>.ar{margin-top:4px}
.paste{width:27px;padding-left:2px;line-height:12px}
.stack{display:flex;flex-direction:column;font-size:7.4px}
.stack span{display:flex;align-items:center;gap:3px}
.cs{padding:1px 0 0 2px}
.cs>span{height:14.300px}
.stack.cs>span{gap:2px}
.cs>span.dim{letter-spacing:-.1px}
.row{display:flex;align-items:center}
.combo{background:#fdfcfe;border:1px solid #d9d8db;height:13px;display:flex;align-items:center;justify-content:space-between;font-size:7.4px;padding:0 3px 0 1px}
.r1{padding:7px 0 0 2px;height:20px}
.c1{width:58px}.c2{width:26px;border-left:0;padding-right:2px}
.ga,.gs{font-size:10px;line-height:12px;font-weight:600;color:#55545a;padding-left:4px;width:14px;white-space:nowrap}
.gs{font-size:8.5px;padding-left:3px}
.ga sup,.gs sup{font-size:5px;line-height:0;vertical-align:5px}
.r2{height:21px;padding-left:7px;font-size:9.5px;color:#3f3e43}
.r2 b,.r2 em,.r2 u{width:13px}
.r2 em{font-family:"Liberation Serif",serif;font-weight:700;padding-left:1px}
.r2 u{width:11px;font-weight:600}
.r2>svg:nth-of-type(2){margin-left:7px;margin-right:4px}
.r2>svg:nth-of-type(4){margin-left:8px;margin-right:3px}
.redA{border-bottom:3px solid #d22b2f;width:10px;text-align:center;line-height:9px;font-weight:600;margin:2px 4px 0 3px;height:12px;font-size:9px}
.acol{width:73px;padding:7px 0 0 5px}
.acol .row{gap:4px;height:13px}
.acol .row+.row{margin-top:5px}
.ori{margin-left:2px}.ind{margin-left:2px}
.acol2{padding:7px 0 0 4px;font-size:7.4px}
.acol2 span{display:flex;align-items:center;gap:2px;height:12px}
.acol2 span+span{margin-top:7px}
.acol2 .ar{margin-left:3px}
.c3{margin:7px 2px 0 3px;padding-right:0}
.c3 i{width:6px;height:11px;background:#e1e0e3}
.nr{height:21px;padding:3px 0 0 6px;font-size:10px}
.nr .ar{margin:0 5px 0 5px}
.pct{width:15px}.comma{width:13px;font-size:8px}
.dec{font-size:5px;line-height:5px;width:14px;font-weight:700}
.w46{width:47px;padding-left:2px}.w36{width:37px}.w28{width:28px}.w25{width:25px}.w27{width:28px}.w26{width:26px}
.cells .g-body{padding-left:2px}
.es{width:54px;padding:1px 0 0 4px;font-size:7.6px}
.es>span{height:13.200px}
.sigma{font-size:11px;line-height:12px;width:7px}
.collapse{position:absolute;right:5px;bottom:3px}

/* formula bar */
.formula{height:55px;padding:7px 3px 8px 4px;display:flex;background:#e5e4e7;font-family:Lato,sans-serif;font-variant-ligatures:none}
.name{width:65px;height:15px;background:#fdfcfe;display:flex;align-items:center;justify-content:space-between;padding:1px 5px 0 3px;font-size:8.6px}
.vdots{height:9px;width:1px;background:#c9c8cb;margin:4px 9px 0 9px}
.fx{width:70px;height:15px;background:#fdfcfe;display:flex;align-items:center;padding:0 7px 0 9px;justify-content:space-between;font:italic 10px "Liberation Serif",serif}
.ftext{margin-left:4px;width:658px;height:40px;background:#fdfcfe;padding:2.600px 0 0 7px;font-size:9px;line-height:12.600px;white-space:nowrap;letter-spacing:.04px}
.fscroll{width:12px;display:flex;flex-direction:column;gap:1px;align-items:center}
.fscroll>svg{margin:5px 0 2px}
.fscroll span,.vscroll span{background:#fff;width:10px;height:11px;display:flex;align-items:center;justify-content:center;border:1px solid #dcdbde}
.fscroll span+span{margin-top:4px}

/* grid */
.gridwrap{display:flex;height:265px}
.sheet{width:823px;overflow:hidden;font-family:Lato,"Open Sans",sans-serif;font-variant-ligatures:none}
.cols{display:grid;grid-template-columns:20px 36px 202px 131px 125px 122px 119px 30px 6px 32px}
.hd{height:12px;font-size:9.3px;line-height:13px;text-align:center;color:#3d3c40}
.hd span{min-width:0;display:flex;justify-content:center}
.hd .sel{background:#cfced1;color:#35744f}
.corner{margin:2px 1px 1px 8px;background:linear-gradient(135deg,transparent 50%,#b4b3b7 51%)}
.blue{height:28px;font-weight:700;font-size:9.600px;line-height:14px;color:#14213a;border-top:1px solid #5c7193}
.cell{border-right:1px solid #5c5c60;padding:.6px 0 0 1.400px;white-space:nowrap;position:relative;min-width:0}
.blue .cell{background:#8eb1e4;letter-spacing:.05px}
.rn{text-align:right;padding-right:8px}
.blue .rn{padding:13px 7px 0 0;font-weight:400;font-size:10px;line-height:14px;color:#333}
.blue .topic{padding:7px 0 0 6px}
.blue .qt{text-align:center}
.blue .cell:last-child{overflow:hidden;padding-left:0;border:0}
.flt{position:absolute;right:0;bottom:1px;width:10px;height:10px;background:#fbfaff}
.flt::after{content:"";position:absolute;left:3px;top:4px;border:2px solid transparent;border-top-color:#555;border-bottom:0}
.tiny .flt{width:5px;height:5px}.tiny .flt::after{display:none}
.body{height:225px;font-size:9.600px;line-height:14px;color:#2c2b2f;background:#fdfdfe}
.body .cell{padding-top:1px;border-color:#6e6e72;letter-spacing:.05px}
.body .rn{background:#d2d1d4;border-right:1px solid #2b7350}
.body .ca{border-right:1.500px solid #28704b;padding-top:77.600px;line-height:13.900px}
.body .cb{border-right:1.500px solid #28704b;padding:1.600px 0 0 1.400px;font-size:9.050px;line-height:12.610px;letter-spacing:.02px}
.body .one{text-align:center;border:0}
.cursor{position:absolute;left:46px;top:165px}
.caret{box-shadow:-1px 0 #333}
.vscroll{width:13px;background:#dddcdf;display:flex;flex-direction:column;align-items:center;justify-content:space-between}
.vscroll i{width:10px;height:10px;background:#fff;margin-top:152px}

.sheets{height:15px;background:#e3e2e5;display:flex;font-size:8.600px;line-height:15px;font-family:"Noto Sans",sans-serif}
.arrows{width:14px;padding-left:13px;color:#c2c1c5}
.s1{width:40px;margin-left:23px;background:#fdfcfe;color:#2c7b52;font-weight:700;text-align:center;border-bottom:1px solid #2c7b52;line-height:15px}
.s2{width:38px;text-align:center;border-right:1px solid #c3c2c5;color:#545358}
.plus{margin:3px 0 0 18px}
.grip{margin:4px 0 0 343px;height:7px;border-left:1px dotted #99989c}
.hs{margin-left:7px;display:flex;width:320px;height:10px;margin-top:3px;background:#dddcdf;gap:1px}
.hs i{width:10px;background:#fff;display:flex;align-items:center;justify-content:center}
.hs b{width:140px;background:#fff}
.sbar{height:15px;background:#f1f0f2;display:flex;align-items:center;font-size:6.800px;border-top:1px solid #d0cfd2;padding-left:3px}
.sbar svg{margin-left:655px}
.sbar span{width:13px}
.sbar em{font-style:normal;color:#aaa;margin-left:-16px}

.taskbar{height:26px;background:linear-gradient(90deg,#22343d,#28333a 50%,#252b30 72%,#1c2d34);display:flex;align-items:center;color:#fff}
.win{width:32px}
.search{width:224px;height:26px;background:#f1f1f3;color:#4c4b50;font-size:8.800px;display:flex;align-items:center;gap:5px;padding-left:10px;letter-spacing:.3px}
.app{height:26px;width:25px;margin-right:5.700px;display:flex;align-items:center;justify-content:center;border-bottom:2px solid #82abd5}
.bdg{font:700 7px Roboto,sans-serif;fill:#fff}
.view{border-color:transparent;width:26px;margin:0 6px 0 3px}
.act{background:#536168;width:29px;margin:0 0 0 -2px}
.tray{margin-left:3px}
.time{font-size:7.500px;line-height:11.500px;text-align:center;width:48px;margin-left:-3px}
.nt{margin-left:12px}

/* floating call window */
.popup{position:absolute;left:645px;top:339px;width:183px;height:104px;background:#171618;box-shadow:0 1px 4px rgba(0,0,0,.4);display:flex;flex-direction:column;align-items:center;color:#eceaee}
.ptitle{width:100%;height:24px;background:#0b0b0c;display:flex;justify-content:space-between;padding:0 11px 0 8px;font-size:8.700px;line-height:24px;white-space:nowrap;letter-spacing:.05px}
.ptitle i{width:6px;height:1px;background:#ccc;margin-top:14px}
.ok{width:39px;height:39px;border-radius:50%;background:#e9d3e3;color:#643a5a;font-weight:600;font-size:15px;line-height:39px;text-align:center;margin-top:3px}
.pbar{display:flex;margin-top:9px;width:94px;height:23px;background:#38363a}
.pbar span{flex:1;display:flex;align-items:center;justify-content:center;color:#fff}
.pbar .end{background:#9f2b46}
.pm .scut{stroke:#38363a}

.sharer{position:absolute;left:3px;top:459px;width:141px;height:21px;padding-left:9px;border-radius:0 10px 10px 0;background:rgba(72,72,72,.62);color:#fff;font:17.600px/20px Roboto,sans-serif;display:flex;align-items:flex-start;gap:8px;white-space:nowrap}
.sharer span{margin-top:3px}
.sharer svg{margin-top:4px}
.cut{stroke:#303030;stroke-width:2.4;fill:none}
.scut{stroke:#282828;stroke-width:1.3;fill:none}

/* participants */
.tiles{width:147px;padding:3px 0 0 3px;display:flex;flex-direction:column;gap:4px;height:492px;overflow:hidden}
.tile{width:141px;background:#282828;border-radius:5px;display:flex;flex-direction:column;align-items:center;flex:none}
.t1{height:93px;padding-top:25px}
.t2{height:141px;padding-top:40px}
.t3{height:143px;padding-top:41px}
.t4{height:98.500px;padding-top:39px;overflow:hidden}
.av{width:62px;height:62px;border-radius:50%;background:#66a3cf;fill:none;stroke:#fff;stroke-width:2;margin-right:2px}
.sm{width:43px;height:43px}
.dimav{background:#5b90b3;stroke:#d5e2eb}
.tile p{font:17.800px/22px Roboto,sans-serif;color:#fff;display:flex;align-items:center;gap:7px;white-space:nowrap;margin-top:13px;letter-spacing:.1px}
.t2 p{margin-left:10px}
.t3 p{margin-left:9px;margin-top:12px}
.mo{margin-top:-4px}

.controls{width:114px;background:#303030;border-radius:0 5px 0 0;padding:12px 12px 0;display:flex;flex-direction:column;gap:12px}
.btn{height:90px;flex:none;display:flex;align-items:center;justify-content:center;color:#fff}
.hang{background:#9c1b38;border-radius:8px}
```
